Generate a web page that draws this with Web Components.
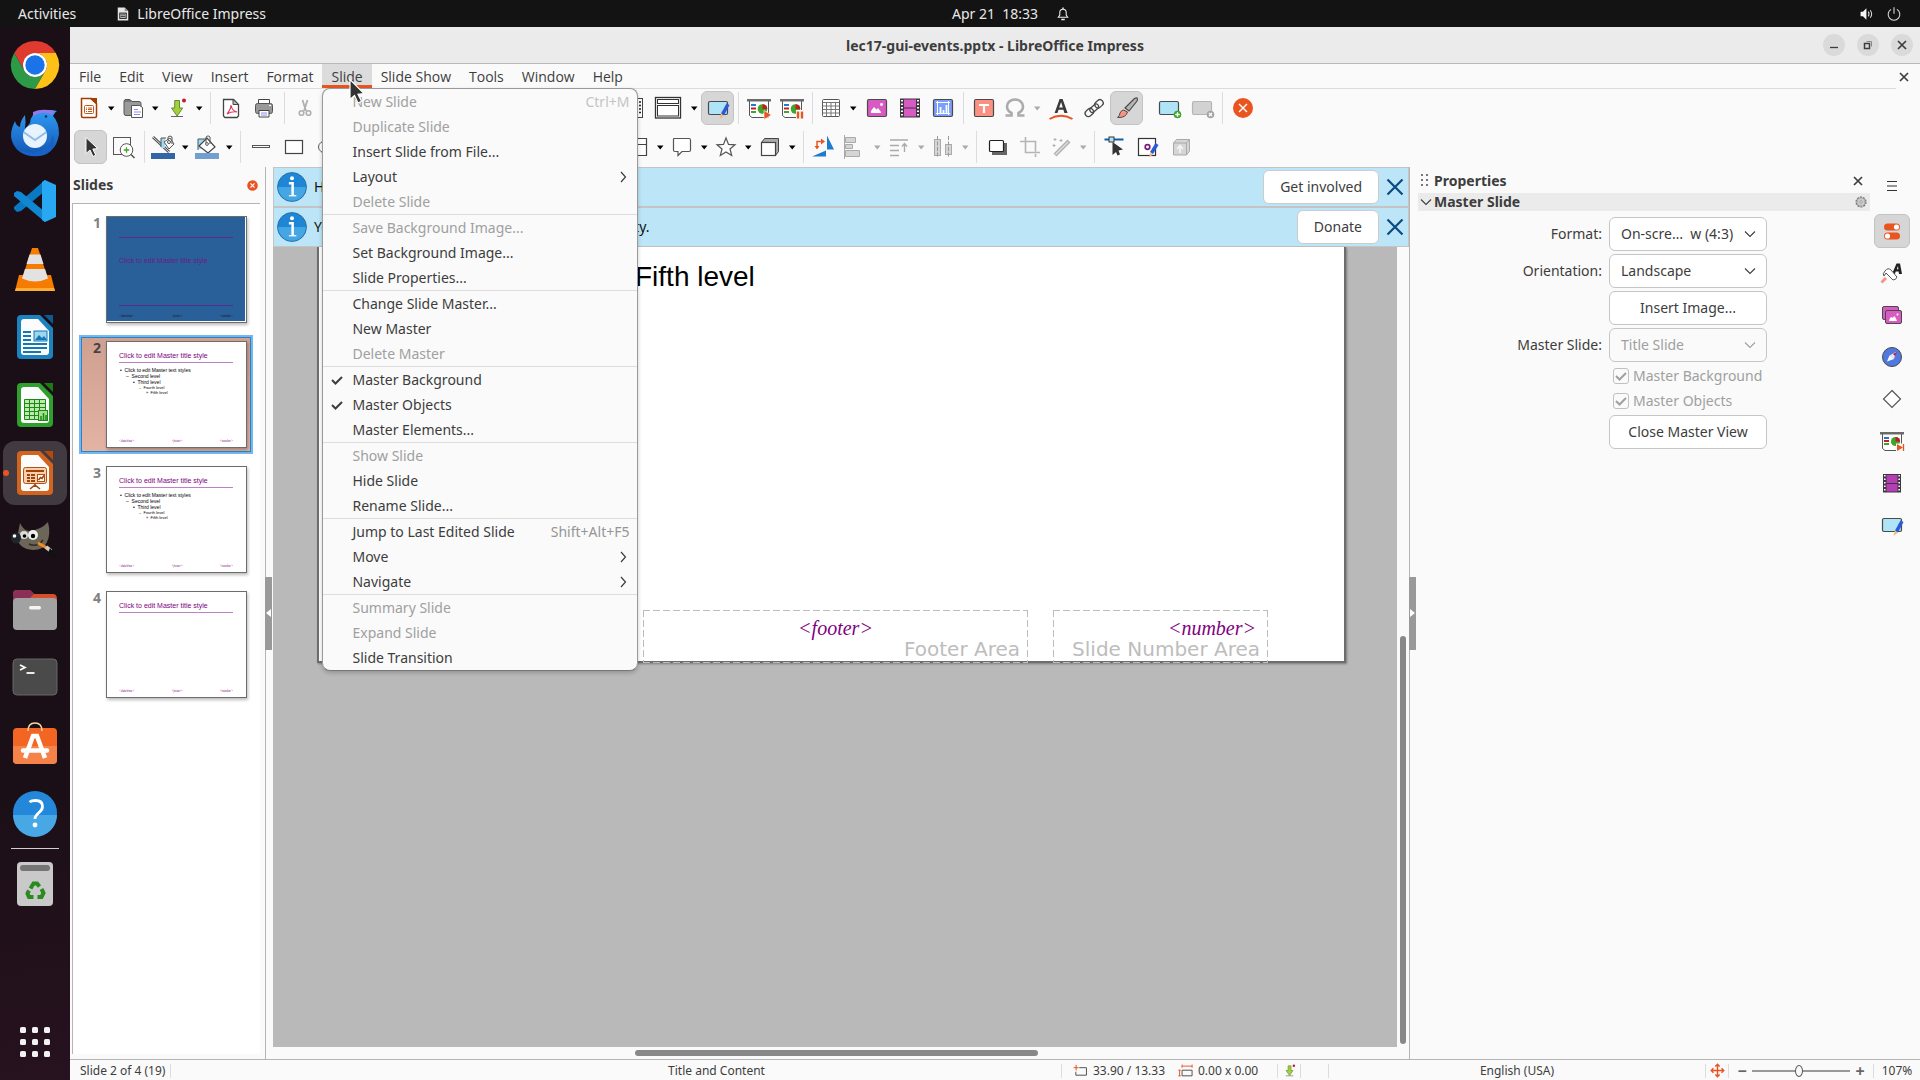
<!DOCTYPE html>
<html lang="en">
<head>
<meta charset="utf-8">
<title>lec17-gui-events.pptx - LibreOffice Impress</title>
<style>
html,body{margin:0;height:100%}
body{font:14px/20px "Noto Sans","Open Sans",sans-serif;color:#3d3d3d;background:#fafafa;overflow:hidden}
</style>
</head>
<body>
<desktop-shell></desktop-shell>
<script>
const ICONS = {
/* toolbar */
newdoc:`<path d="M4.500 2.500h10l5 5v12.500a1.500 1.500 0 0 1-1.500 1.500H6a1.500 1.500 0 0 1-1.500-1.500z" fill="#fff" stroke="#a33e03" stroke-width="1.500"/><path d="M12 2h8v7z" fill="#a33e03"/><rect x="7.500" y="9.500" width="9" height="8" rx="1" fill="none" stroke="#c25a1a"/><path d="M9 12h1m1 0h4m-6 1.500h1m1 0h4m-6 2h1m1 0h4" stroke="#c25a1a"/>`,
open:`<path d="M3 5.500q0-2 2-2h4l2 2h7q2 0 2 2v10q0 2-2 2H5q-2 0-2-2z" fill="#9a9a9a" stroke="#555"/><path d="M3.500 5h7" stroke="#555"/><path d="M10.500 9.500h8l3 2v10h-11z" fill="#fff" stroke="#555"/><path d="M13 13.500h4m-4 2.500h7m-7 2.500h6" stroke="#8d8df0"/>`,
save:`<path d="M9 4.500h6v7.500h4L12 20l-7-8h4z" transform="translate(2.500 0) scale(.8 1)" fill="#a4d040" stroke="#5b8420"/><path d="M6 20.500h12" stroke="#666"/><circle cx="19" cy="4.500" r="2" fill="#c9182b"/>`,
pdf:`<path d="M4.500 3.500h10l5 5V20l-1.500 1.500H6L4.500 20z" fill="#fff" stroke="#444" stroke-width="1.300"/><path d="M14 3.500v5h5.500z" fill="#bbb" stroke="#444"/><path d="M8 18q4-5 4-9 1 6 6 7-5-1-10 2z" fill="none" stroke="#e0355c" stroke-width="1.200"/>`,
print:`<path d="M6.500 3.500h11v4h-11z" fill="#fff" stroke="#444"/><rect x="3.500" y="7.500" width="17" height="10" rx="2" fill="#999" stroke="#555"/><path d="M7 14.500h10v6.500H7z" fill="#fff" stroke="#444"/><path d="M9 17h6m-6 2h6" stroke="#8d8df0"/><path d="M17 9.500h2" stroke="#fff"/>`,
cut:`<path d="M9.500 4l3.500 11M14.500 4l-3.500 11" stroke="#b0b0b0" stroke-width="1.800" fill="none"/><circle cx="8.500" cy="17" r="2.300" fill="none" stroke="#b0b0b0" stroke-width="1.600"/><circle cx="15.500" cy="17" r="2.300" fill="none" stroke="#b0b0b0" stroke-width="1.600"/>`,
gridview:`<rect x="2.500" y="2.500" width="19" height="19" fill="#fff" stroke="#444"/><path d="M6 6h14M6 9.500h14M6 13h14M6 16.500h14" stroke="#222" stroke-width="1.500" stroke-dasharray="2 2"/>`,
master:`<rect x="-.5" y="1.500" width="25" height="20.500" fill="#fff" stroke="#333" stroke-width="1.300"/><rect x="1.500" y="3.500" width="21" height="4" fill="#fff" stroke="#333"/><rect x="1.500" y="9.500" width="21" height="10.500" fill="#fff" stroke="#333"/>`,
masteredit:`<rect x="2.500" y="5.500" width="19" height="13" rx="1.500" fill="#aee3f8" stroke="#4a4a4a" stroke-width="1.200"/><path d="M20.500 7.500l3 1.500-5.500 10.500-3-2z" fill="#2a5bd7"/><path d="M15 17.500l3 2-4.500 3.500z" fill="#f5b87a"/>`,
present:`<path d="M2.500 4.500h19v16q0 1-1 1H5l-2.500-2z" fill="#fff" stroke="#555"/><path d="M0 3h24v2.500H0z" fill="#6b6b6b"/><path d="M4 9h5" stroke="#1f7bd0" stroke-width="2"/><path d="M4 12.500h5" stroke="#c9182b" stroke-width="2"/><path d="M4 16h5" stroke="#41a52a" stroke-width="2"/><circle cx="15.500" cy="13" r="4.800" fill="#41a52a"/><path d="M15.500 13V8.200a4.800 4.800 0 0 1 4.800 4.800z" fill="#c9182b"/><path d="M17 14.500l7.500 4.500-7.500 4.500z" fill="#e95420" stroke="#fff" stroke-width=".6"/>`,
presentpause:`<path d="M2.500 4.500h19v16q0 1-1 1H5l-2.500-2z" fill="#fff" stroke="#555"/><path d="M0 3h24v2.500H0z" fill="#6b6b6b"/><path d="M4 9h5" stroke="#1f7bd0" stroke-width="2"/><path d="M4 12.500h5" stroke="#c9182b" stroke-width="2"/><path d="M4 16h5" stroke="#41a52a" stroke-width="2"/><circle cx="15.500" cy="13" r="4.800" fill="#41a52a"/><path d="M15.500 13V8.200a4.800 4.800 0 0 1 4.800 4.800z" fill="#c9182b"/><path d="M16 14h8v9h-8z" fill="#fafafa"/><path d="M18 15.500v7m4-7v7" stroke="#e95420" stroke-width="2.400"/>`,
transition:`<path d="M2.500 4.500h19v16q0 1-1 1H5l-2.500-2z" fill="#fff" stroke="#555"/><path d="M0 3h24v2.500H0z" fill="#6b6b6b"/><path d="M4 9h5" stroke="#1f7bd0" stroke-width="2"/><path d="M4 12h5" stroke="#c9182b" stroke-width="2"/><path d="M4 15h5" stroke="#41a52a" stroke-width="2"/><circle cx="15.500" cy="12.500" r="4.600" fill="#41a52a"/><path d="M15.500 12.500V7.900a4.600 4.600 0 0 1 4.600 4.600z" fill="#c9182b"/><path d="M16 14.500h8v8h-8z" fill="#fafafa"/><path d="M17 15l6 3.500-6 3.500z" fill="#e95420"/><path d="M23.500 15v7" stroke="#e95420" stroke-width="1.300"/>`,
table:`<rect x="3.500" y="3.500" width="17" height="17" rx="1" fill="#fff" stroke="#555"/><path d="M3.500 6.500h17M3.500 10h17M3.500 13.500h17M3.500 17h17M7.500 6.500v14M12 6.500v14M16.500 6.500v14" stroke="#777"/>`,
image:`<rect x="2.500" y="3.500" width="19" height="17" rx="1.500" fill="#d85bc4" stroke="#4a4a4a" stroke-width="1.200"/><path d="M6 17v-2l3-4 2.500 2.500L13 12l3 4v1z" fill="#fff"/><circle cx="16.500" cy="8.500" r="1.400" fill="#fff"/>`,
video:`<rect x="2" y="2.500" width="20" height="19" fill="#3f3440"/><rect x="6" y="3.500" width="12" height="8" fill="#d85bc4"/><rect x="6" y="12.500" width="12" height="8" fill="#d85bc4"/><path d="M4 4v17M20 4v17" stroke="#fff" stroke-width="2" stroke-dasharray="1.500 2"/>`,
videodeck:`<rect x="3" y="3" width="18" height="18.500" fill="#3f3440"/><rect x="6.500" y="4" width="11" height="8" fill="#b43fb4"/><rect x="6.500" y="13" width="11" height="7.500" fill="#b43fb4"/><path d="M4.800 4v17M19.200 4v17" stroke="#fff" stroke-width="1.600" stroke-dasharray="1.500 2"/>`,
chart:`<rect x="2.500" y="3.500" width="19" height="17" rx="1.500" fill="#7ba0fb" stroke="#4a4a4a" stroke-width="1.200"/><path d="M6.500 5v14M5 6.500h14M17.500 5v14M5 17.500h14" stroke="#fff"/><path d="M9.500 17v-6m3 6v-3m3 3V9" stroke="#fff" stroke-width="1.800"/>`,
textbox:`<rect x="2.500" y="3.500" width="19" height="17" rx="1.500" fill="#fb9183" stroke="#4a4a4a" stroke-width="1.200"/><path d="M7 9h10M12 9v8" stroke="#fff" stroke-width="2.200"/>`,
omega:`<path d="M2.500 19.500h6v-2.500C5.500 15.500 4 13 4 10.500a8 7 0 0 1 16 0c0 2.500-1.500 5-4.500 6.500v2.500h6" fill="none" stroke="#ababab" stroke-width="2.600"/>`,
fontwork:`<path d="M6 17l5-14h3l5 14h-3.200l-1-3.200H9.900l-1 3.200zm4.600-5.600h3.600L12.500 6z" transform="translate(-.4 0)" fill="#3a3a3a"/><path d="M.5 23q11.500-6.500 23 0" fill="none" stroke="#e95420" stroke-width="2"/>`,
link:`<g fill="none" stroke="#4a4a4a" stroke-width="1.300" transform="rotate(-42 12 12)"><rect x="1" y="9" width="9" height="6.500" rx="3.200"/><rect x="14" y="9" width="9" height="6.500" rx="3.200"/><rect x="7" y="9.800" width="10" height="5" rx="2.500"/></g>`,
brush:`<path d="M22 2q1 1 0 3l-8 10-4-3 9-9q2-1.500 3-1z" fill="#b5b5b5" stroke="#4a4a4a" stroke-width="1.200"/><path d="M8.500 14l4 2q-1.500 6-10 5.500 2.500-2 2.500-4.500 1.500-3 3.500-3z" fill="#fb9183" stroke="#4a4a4a"/>`,
newslide:`<rect x="2.500" y="5.500" width="19" height="13" rx="1.500" fill="#aee3f8" stroke="#4a4a4a" stroke-width="1.200"/><circle cx="20.500" cy="18.500" r="3.800" fill="#41a52a"/><path d="M18.300 18.500h4.400m-2.200-2.200v4.400" stroke="#fff" stroke-width="1.300"/>`,
delslide:`<rect x="2.500" y="5.500" width="19" height="13" rx="1.500" fill="#d2d2d2" stroke="#b5b5b5" stroke-width="1.200"/><circle cx="20.500" cy="18.500" r="3.800" fill="#a5a5a5"/><path d="M19 17l3 3m0-3l-3 3" stroke="#fff" stroke-width="1.200"/>`,
closemaster:`<circle cx="12" cy="12" r="10" fill="#e95420"/><path d="M8 8l8 8m0-8l-8 8" stroke="#fff" stroke-width="1.400"/>`,
arrow:`<path d="M7 2.500v16l4-3.500 3 6.500 2.800-1.300-3-6.200 5-.3z" fill="#333" stroke="#fff"/>`,
zoomin:`<rect x="1.500" y="2.500" width="17" height="17" fill="#fafafa" stroke="#555"/><circle cx="14.500" cy="15" r="6.300" fill="#fff" stroke="#555"/><path d="M19 19.500l3.500 3.500" stroke="#555" stroke-width="1.600"/><path d="M11.800 15h5.400m-2.700-2.700v5.400" stroke="#41a52a" stroke-width="1.300"/>`,
linecolor:`<path d="M2 2l16 15" stroke="#555" stroke-width="3"/><path d="M2 2l16 15" stroke="#ddd"/><path d="M10 3h4v10h-4z" fill="#9ddcf7"/><path d="M10 3h5M10 3v9" stroke="#555"/><path d="M13 7l6-4 4 6-5 5z" fill="#fff" stroke="#555"/><circle cx="18" cy="7" r="1.500" fill="#fff" stroke="#555"/><path d="M17 5V2q2-2 4 0v7" stroke="#555" fill="none"/><rect y="18" width="24" height="6" fill="#3465a4"/>`,
fillcolor:`<path d="M3 4h6v10H3z" fill="#9ddcf7"/><path d="M3 15V4h8" stroke="#555" fill="none"/><path d="M4 11l8-8 8 9-7 6z" fill="#fff" stroke="#444" stroke-width="1.200"/><path d="M11 8V2q2-2.500 4 0v7" stroke="#555" fill="none"/><circle cx="12" cy="9" r="1.400" fill="#fff" stroke="#555"/><rect y="18" width="24" height="6" fill="#729fcf"/>`,
line:`<rect x="3.500" y="10.500" width="17" height="2" fill="#fff" stroke="#555"/>`,
rect:`<rect x="3.500" y="5.500" width="17" height="13" fill="#fff" stroke="#444" stroke-width="1.200"/>`,
ellipse:`<ellipse cx="12" cy="12" rx="8.500" ry="6.500" fill="#fff" stroke="#555"/>`,
flow:`<path d="M3.500 3.500h17v17h-17z M3.500 9.500h17" fill="#fff" stroke="#444" stroke-width="1.200"/>`,
callout:`<path d="M4 3.500h15q1.500 0 1.500 1.500v10q0 1.500-1.500 1.500h-7L8 20.500v-4H5q-1.500 0-1.500-1.500V4z" fill="#fff" stroke="#555" stroke-width="1.200"/>`,
star:`<path d="M12 3l2.500 6.400 6.500.4-5 4.200 1.700 6.500L12 16.900l-5.700 3.600L8 14l-5-4.200 6.500-.4z" fill="#fff" stroke="#555" stroke-width="1.200"/>`,
cube:`<path d="M3.500 7.500l3-4h14v13l-3 4z" fill="#aaa" stroke="#444"/><rect x="3.500" y="7.500" width="14" height="13" fill="#fff" stroke="#444" stroke-width="1.200"/>`,
rotate:`<path d="M15 .5v14h7zM14 15.500v6H0z" fill="#1f7bd0"/><path d="M5 13V6.500h5" fill="none" stroke="#e95420" stroke-width="1.500"/><path d="M9 3.500l4 3-4 3zM2.500 11h5L5 14.500z" fill="#e95420"/>`,
align:`<path d="M1.500 0v24" stroke="#aaa"/><path d="M2.500 2.500h10v5h-10zM2.500 9.500h7v4h-7zM2.500 15.500h14v6h-14z" fill="#d5d5d5" stroke="#aaa"/>`,
arrange:`<path d="M3 5h18M3 10.500h9M3 15.500h9M3 20.500h9" stroke="#aaa" stroke-width="1.500"/><path d="M17.500 17V9m-2.500 2.500l2.500-3 2.500 3" fill="none" stroke="#aaa" stroke-width="1.400"/>`,
distribute:`<rect x="3.500" y="4.500" width="6" height="16" fill="#d5d5d5" stroke="#aaa"/><rect x="14.500" y="9.500" width="6" height="10" fill="#d5d5d5" stroke="#aaa"/><path d="M6.500 1v22M17.500 1v22" stroke="#999" stroke-dasharray="4 1.500"/>`,
shadow:`<path d="M7 8h15v12H7z" fill="#666"/><rect x="4.500" y="5.500" width="14" height="11" rx="1" fill="#fff" stroke="#222" stroke-width="1.200"/>`,
crop:`<path d="M2 6.500h15.500v10M7.500 2v15.500H22M17.500 19v3" fill="none" stroke="#b5b5b5" stroke-width="1.600"/>`,
filter:`<path d="M6 20L20 6" stroke="#b0b0b0" stroke-width="4"/><path d="M6.500 19.500L19 7" stroke="#ddd" stroke-width="1.500"/><path d="M6 3v3m-1.500-1.500h3M12 4v3m-1.500-1.500h3M5 9v3m-1.500-1.500h3" stroke="#b0b0b0"/>`,
points:`<path d="M1.500 4.500h19" stroke="#0e5ea8" stroke-width="2"/><rect x="6" y="2" width="5" height="5" fill="#aee3f8" stroke="#333"/><path d="M9.500 7v13l3.500-3 1.500 3.500 2.500-1-1.500-4 4.500-1z" fill="#333"/>`,
glue:`<rect x="2.500" y="3.500" width="17" height="17" fill="#fff" stroke="#333" stroke-width="1.200"/><circle cx="11.500" cy="12" r="2.300" fill="none" stroke="#7a1b7a" stroke-width="1.700"/><path d="M19.500 8l3 2-5.500 9-3-2z" fill="#2a5bd7"/><path d="M14 17.500l3 2-4 3z" fill="#f5b87a"/>`,
extrude:`<path d="M4.500 8l3-3.500h13V16l-3 4h-13z" fill="#d5d5d5" stroke="#aaa"/><path d="M4.500 8h13v12m0-12l3-3.500" fill="none" stroke="#aaa"/><path d="M11 18v-7m-3 3l3-3.500 3 3.500" fill="none" stroke="#f5f5f5" stroke-width="1.600"/>`,
down:`<path d="M9 10.500h6.500L12.200 14.500z" fill="currentColor"/>`,
/* window parts */
chevdown:`<path d="M7 9.500l5 5 5-5" fill="none" stroke="currentColor" stroke-width="1.100"/>`,
chevright:`<path d="M10 7l4.500 5-4.500 5" fill="none" stroke="currentColor" stroke-width="1.200"/>`,
check:`<path d="M7 12l3.500 3.500 6.500-6.500" fill="none" stroke="currentColor" stroke-width="2"/>`,
close:`<path d="M8 8l8 8m0-8l-8 8" stroke="currentColor" stroke-width="1.700"/>`,
closebig:`<path d="M4.500 4.500l15 15m0-15l-15 15" stroke="#0b4a82" stroke-width="2.200"/>`,
min:`<path d="M8 14.500h8" stroke="currentColor" stroke-width="1.300"/>`,
restore:`<path d="M8.500 10.500h5v5h-5z" fill="none" stroke="currentColor" stroke-width="1.500"/><path d="M10.500 8.500h5v5" fill="none" stroke="#888"/>`,
info:`<circle cx="12" cy="12" r="11.600" fill="#1f86d6" stroke="#27668f" stroke-width=".6"/><path d="M1 12h22a11 11 0 0 1-22 0z" fill="#45a6e4"/><circle cx="12" cy="5" r="1.600" fill="#fff"/><path d="M9.500 9H12.500v10" fill="none" stroke="#fff" stroke-width="2"/><path d="M9.500 19h6" stroke="#fff"/>`,
grip:`<path d="M9 6h2v2H9zm5 0h2v2h-2zM9 11h2v2H9zm5 0h2v2h-2zM9 16h2v2H9zm5 0h2v2h-2z" fill="#777"/>`,
gear:`<circle cx="12" cy="12" r="8.500" fill="none" stroke="#777" stroke-width="2" stroke-dasharray="3.600 1.700"/><circle cx="12" cy="12" r="7" fill="#ccc" stroke="#777"/><circle cx="12" cy="12" r="2.200" fill="#eee" stroke="#777"/>`,
burger:`<path d="M7 7.500h10M7 12h10M7 16.500h10" stroke="#333" stroke-width="1.200"/>`,
props:`<rect x="4" y="4.500" width="16" height="7" rx="3.500" fill="#e95420"/><circle cx="16.500" cy="8" r="2.600" fill="#fff"/><rect x="4" y="13.500" width="16" height="7" rx="3.500" fill="#e95420"/><circle cx="7.500" cy="17" r="2.600" fill="#fff"/>`,
styles:`<path d="M12 13L16.500 2.500H20L22 13h-3l-.4-2.500h-2.800L14.800 13zm4.800-4.800h1.600L18 5z" fill="#222"/><path d="M5 10q3-4 6-1l6 7q-1 3-4 3l-7-7-2 3q-2-2 1-5z" fill="#fff" stroke="#555"/><path d="M1.500 21.500l4.500-4.500" stroke="#fb9183" stroke-width="2.800"/>`,
gallery:`<rect x="2.500" y="3.500" width="16" height="13" rx="1.500" fill="#d85bc4" stroke="#4a4a4a"/><rect x="5.500" y="7.500" width="16" height="13" rx="1.500" fill="#d85bc4" stroke="#4a4a4a"/><path d="M9 18l1-3 1.500-1 1.500 1 1-2 1.500 1.500L17 18z" fill="#fff"/><circle cx="17.500" cy="11.500" r="1" fill="#fff"/>`,
navigator:`<circle cx="12" cy="12" r="9.500" fill="#4f78e0" stroke="#4a4a4a"/><path d="M7 16.500l2.500-6 4.500 3.500z" fill="#fff"/><path d="M9.500 10.500l6.500-3.500-2 7z" fill="#e8e8f4"/><path d="M13 9l4-2-2 4z" fill="#c9182b"/>`,
diamond:`<path d="M12 3.500l8.500 8.500-8.500 8.500L3.500 12z" fill="#fff" stroke="#555" stroke-width="1.200"/>`,
panelclose:`<circle cx="12" cy="12" r="11.500" fill="#e95420"/><path d="M7.500 7.500l9 9m0-9l-9 9" stroke="#fff" stroke-width="2.600"/>`,
pos:`<path d="M10 7.500h11.500v12h-17V14" fill="none" stroke="#555" stroke-width="1.600"/><path d="M1 7.500h8M5 3v9" stroke="#e95420" stroke-width="1.600"/>`,
size:`<path d="M6.500 11.500h16v9h-16z" fill="none" stroke="#555" stroke-width="1.600"/><path d="M6 5h17M6.500 2.500v5M22.500 2.500v5M2.500 11v10M.5 11.500h4M.5 20.500h4" stroke="#e95420" stroke-width="1.500"/>`,
fit:`<path d="M12 3v18M3 12h18M8.500 5.500L12 2l3.500 3.500M8.500 18.500L12 22l3.500-3.500M5.500 8.500L2 12l3.500 3.500M18.500 8.500L22 12l-3.500 3.500" stroke="#e95420" stroke-width="2.300" fill="none"/>`,
/* top bar */
appicon:`<path d="M3 1h12l6 6v16H3z" fill="#e6e6e6"/><path d="M15 1l6 6h-6z" fill="#888"/><rect x="6.500" y="10.500" width="11" height="9" fill="none" stroke="#222" stroke-width="1.800"/><path d="M8 13.500h8M8 16.500h8" stroke="#222" stroke-width="1.600"/>`,
bell:`<path d="M4 17.500h16l-2.500-3.500V9.500a5.500 5.500 0 0 0-11 0V14z" fill="none" stroke="#eee" stroke-width="1.800"/><path d="M9 21.500h6M12 1v3" stroke="#eee" stroke-width="2.400"/>`,
volume:`<path d="M1 8h4l6-6v20l-6-6H1z" fill="#f5f5f5"/><path d="M14 8q3 4 0 8M17.500 5.500q5 6.500 0 13" stroke="#ddd" stroke-width="1.800" fill="none"/>`,
power:`<path d="M7 4a10 10 0 1 0 10 0M12 .5v11" fill="none" stroke="#ddd" stroke-width="1.800"/>`
};
const DOCK = {
chrome:`<path d="M24 12H44.800A24 24 0 0 0 3.200 12L13.600 30A12 12 0 0 1 24 12Z" fill="#e13b30"/><path d="M13.600 30L3.200 12A24 24 0 0 0 24 48L34.400 30A12 12 0 0 1 13.600 30Z" fill="#2c9a46"/><path d="M34.400 30L24 48A24 24 0 0 0 44.800 12H24A12 12 0 0 1 34.400 30Z" fill="#fdc118"/><circle cx="24" cy="24" r="12" fill="#fff"/><circle cx="24" cy="24" r="9.700" fill="#1a73e8"/>`,
bird:`<defs><linearGradient id="g" x2="0" y2="1"><stop stop-color="#2f9cf4"/><stop offset="1" stop-color="#1256b4"/></linearGradient></defs><path d="M4 12q-6 12-3 20 5 14 22 15 22 0 25-22 0-12-6-18 2-4 4-5-8-2-17 0-9 2-10 12l-5 6q1-8 0-14-5 6-5 12-4-1-5-6z" fill="url(#g)"/><path d="M22 3q8-4 22-1l-3 4q-8-5-19 1z" fill="#9678e8"/><circle cx="24" cy="27" r="12" fill="#e9f3fd"/><path d="M12.500 23l11.500 8 11.500-8" fill="none" stroke="#8fbdea" stroke-width="2"/><path d="M1 32q8 14 24 11 15-3 17-18 4 20-14 22-20 2-27-15z" fill="#1762c4"/><circle cx="35" cy="7.500" r="1.200" fill="#0b2f66"/>`,
code:`<path d="M34 3v11L10 34l-4 1-3-3v-2z" fill="#0a79c4"/><path d="M3 16l3-2 4 1 24 20v10L3 19z" fill="#1187d2"/><path d="M34 3l11 5v32l-11 5-3-2V5z" fill="#28a8f2"/>`,
vlc:`<path d="M8 30h32l4 16H4z" fill="#f57c00"/><path d="M5 43h38l1 3H4z" fill="#ffae35"/><path d="M21 3h6l11 34q-14 8-28 0z" fill="#f57c00"/><path d="M18.500 9.500h11l3 9.500h-17zM14 24h20l3 9.500q-13 6-26 0z" fill="#e2e2e2"/>`,
writer:`<path d="M6 6q0-4 4-4h19l13 13v27q0 4-4 4H10q-4 0-4-4z" fill="#1b83c0"/><path d="M10 9q0-3 3-3h14l11 12v21q0 3-3 3H13q-3 0-3-3z" fill="#fcfcfc"/><path d="M33 2h9v9z" fill="#0c5c90"/><path d="M12 19h8M12 23h8M12 27h8M12 31h24M12 35h24M12 39h18" stroke="#1378b5" stroke-width="2"/><rect x="23" y="18" width="13" height="10" fill="#9cd6ef" stroke="#1378b5"/><path d="M24 27l4-5 3 3 2-2 3 4z" fill="#1378b5"/>`,
calc:`<path d="M6 6q0-4 4-4h19l13 13v27q0 4-4 4H10q-4 0-4-4z" fill="#2fa02c"/><path d="M10 9q0-3 3-3h14l11 12v21q0 3-3 3H13q-3 0-3-3z" fill="#fcfcfc"/><path d="M33 2h9v9z" fill="#1b7a10"/><path d="M13.500 18.500h21v20h-21z" fill="#bde8b0" stroke="#1b8a14"/><path d="M13.500 22.500h21m-21 4h21m-21 4h21m-21 4h21M18.500 18.500v20m5-20v20m5-20v20" stroke="#1b8a14"/><rect x="27.500" y="29.500" width="9" height="10" fill="#a4df90" stroke="#1b8a14"/><path d="M30 39v-4m2.500 4v-7m2.500 7v-5" stroke="#1b8a14" stroke-width="1.500"/>`,
impress:`<path d="M6 6q0-4 4-4h19l13 13v27q0 4-4 4H10q-4 0-4-4z" fill="#d2641e"/><path d="M10 9q0-3 3-3h14l11 12v21q0 3-3 3H13q-3 0-3-3z" fill="#fcfcfc"/><path d="M33 2h9v9z" fill="#b8480a"/><rect x="12.500" y="18.500" width="23" height="16" rx="2" fill="#f6cfae" stroke="#b5500f"/><path d="M15 22h18M16 26h3m-3 3h3m-3 3h3m1-6h4m-4 3h4m-4 3h4" stroke="#a04308" stroke-width="1.800"/><rect x="26.500" y="25.500" width="7" height="7" fill="#fff" stroke="#b5500f"/><path d="M27.500 31l2-2.500 1.500 1 2-3M19 40l5-4 5 4M24 35v3" fill="none" stroke="#a04308" stroke-width="1.600"/>`,
gimp:`<path d="M9 6q3 7 9 8 12-1 19-9 3 12-1 20-3 8-14 8-14-1-16-12z" fill="#6c6658"/><circle cx="22" cy="18" r="5" fill="#eee"/><circle cx="13" cy="18" r="4" fill="#ddd"/><circle cx="22" cy="19" r="2.200"/><circle cx="13.500" cy="19" r="1.800"/><ellipse cx="5" cy="21" rx="5" ry="5.500" fill="#20252b"/><circle cx="3.500" cy="19" r="1.800" fill="#fff"/><path d="M18 27q8 4 14-4" fill="none" stroke="#2e2a22" stroke-width="1.500"/><path d="M27 26l9 5" stroke="#f28c1e" stroke-width="3"/><path d="M35 30l5 4" stroke="#ccc" stroke-width="4"/><path d="M39 31l8 10q-8 0-10-5z" fill="#111"/>`,
files:`<path d="M2 9q0-4 4-4h13l4 4h19q4 0 4 5v6H2z" fill="#d4502c"/><path d="M2 9q0-4 4-4h13l4 4-8 8H2z" fill="#8a3058"/><rect x="2" y="13" width="44" height="32" rx="4" fill="#a2a2a2"/><rect x="18" y="21" width="12" height="3.500" rx="1.700" fill="#f4f4f4"/>`,
term:`<rect x="2" y="6" width="44" height="36" rx="4" fill="#4a4a4a" stroke="#666"/><path d="M9 12l5 2.500-5 2.500" fill="none" stroke="#fff" stroke-width="1.700"/><path d="M15.500 20h8" stroke="#fff" stroke-width="1.800"/>`,
store:`<rect x="2" y="7" width="44" height="36" rx="4" fill="#f26522"/><path d="M2 25h44v14q0 4-4 4H6q-4 0-4-4z" fill="#f58248"/><path d="M17 10q0-8 7-8t7 8" fill="none" stroke="#f8d9a0" stroke-width="1.500"/><path d="M14 37l8-22h4l8 22" fill="none" stroke="#fff" stroke-width="4.500"/><path d="M12 29.500h24" stroke="#fff" stroke-width="4.500" stroke-linecap="round"/>`,
help:`<circle cx="24" cy="24" r="22" fill="#2388da"/><path d="M2 26h44a22 22 0 0 1-44 0z" fill="#48a8e6"/><path d="M18.500 13q2-1.500 6-1.500 7 0 7 6 0 3.500-4 6.500-3.500 3-3.500 6" fill="none" stroke="#fff" stroke-width="2.800"/><circle cx="24" cy="36" r="2.400" fill="#fff"/>`,
trash:`<rect x="6" y="2" width="36" height="44" rx="4" fill="#c9c9c9"/><rect x="9" y="5" width="30" height="6" rx="3" fill="#757575"/><g fill="none" stroke="#2a8a1e" stroke-width="4"><path d="M19.500 28.500l3-5h3.500l2.500 3"/><path d="M30.500 29l2 4-2 4h-4"/><path d="M22.500 37h-4.500l-1.500-3.500 1.500-3"/></g>`,
apps:`<g fill="#f2f2f2"><rect x="9" y="9" width="6" height="6" rx="1.500"/><rect x="21" y="9" width="6" height="6" rx="1.500"/><rect x="33" y="9" width="6" height="6" rx="1.500"/><rect x="9" y="21" width="6" height="6" rx="1.500"/><rect x="21" y="21" width="6" height="6" rx="1.500"/><rect x="33" y="21" width="6" height="6" rx="1.500"/><rect x="9" y="33" width="6" height="6" rx="1.500"/><rect x="21" y="33" width="6" height="6" rx="1.500"/><rect x="33" y="33" width="6" height="6" rx="1.500"/></g>`
};
const BASE = `*{box-sizing:border-box}button{font:inherit;color:inherit;background:none;border:0;margin:0;padding:0}`;
function define(name, css, html) {
  customElements.define(name, class extends HTMLElement {
    constructor() { super(); this.attachShadow({mode:"open"}); }
    connectedCallback() {
      const body = typeof html === "function" ? html(this) : html;
      this.shadowRoot.innerHTML = `<style>${BASE}${css}</style>${body}`;
    }
  });
}
const at = (el, n) => el.getAttribute(n) || "";

define("lo-icon", `:host{display:block;flex:none;width:var(--size,24px);height:var(--size,24px)}svg{display:block;width:100%;height:100%;overflow:visible}`,
  el => { const n = at(el,"name"); return DOCK[n] ? `<svg viewBox="0 0 48 48" aria-hidden="true">${DOCK[n]}</svg>` : `<svg viewBox="0 0 24 24" aria-hidden="true">${ICONS[n]}</svg>`; });

/* system top bar */
define("top-bar", `:host{display:grid;grid-template-columns:1fr auto 1fr;align-items:center;height:27px;background:#131313;color:#e8e8e8}
div{display:flex;align-items:center}.l{padding-left:18px;gap:40px}.app{gap:7px}.c{padding-left:102px;gap:18px}.r{justify-content:flex-end;gap:13px;padding-right:19px}
span{white-space:pre}`,
`<div class="l"><button>Activities</button><div class="app"><lo-icon name="appicon" style="--size:14px"></lo-icon><span>LibreOffice Impress</span></div></div>
<div class="c"><span>Apr 21  18:33</span><lo-icon name="bell" style="--size:14px"></lo-icon></div>
<div class="r"><lo-icon name="volume" style="--size:14px"></lo-icon><lo-icon name="power" style="--size:14px"></lo-icon></div>`);

/* launcher */
define("dock-item", `:host{display:block;padding:2px 3px;height:68px}button{position:relative;display:grid;place-items:center;width:64px;height:64px;border-radius:12px}
:host([active]) button{background:#423a41}:host([active]) button::before{content:"";position:absolute;left:0;top:29px;width:6px;height:6px;border-radius:50%;background:#e95420}lo-icon{--size:48px}`,
el => `<button aria-label="${at(el,"icon")}"><lo-icon name="${at(el,"icon")}"></lo-icon></button>`);
define("app-dock", `:host{display:flex;flex-direction:column;width:70px;padding:4px 0;background:linear-gradient(170deg,#1a0f16 0 70%,#27121f)}
hr{width:48px;margin:1px auto;border:0;height:1px;background:#d0d0d0}.s{flex:1}`,
["chrome","bird","code","vlc","writer","calc","impress","gimp","files","term","store","help"].map(n => `<dock-item icon="${n}"${n==="impress"?" active":""}></dock-item>`).join("") +
`<hr><dock-item icon="trash"></dock-item><div class="s"></div><dock-item icon="apps"></dock-item>`);

define("title-bar", `:host{display:grid;grid-template-columns:1fr auto 1fr;align-items:center;height:37px;background:#ebebeb;border-bottom:1px solid #b9b9b9;font-weight:700}
h1{margin:1px 0 0;font:inherit}.r{display:flex;justify-content:flex-end;gap:12px;padding-right:7px}button{width:22px;height:22px;border-radius:50%;background:#dadada;display:grid;place-items:center}lo-icon{margin:-1px}`,
`<span></span><h1>lec17-gui-events.pptx - LibreOffice Impress</h1><div class="r"><button aria-label="Minimize"><lo-icon name="min"></lo-icon></button><button aria-label="Restore"><lo-icon name="restore"></lo-icon></button><button aria-label="Close"><lo-icon name="close"></lo-icon></button></div>`);

/* menus */
define("menu-item", `:host{display:block}button{display:flex;align-items:center;width:100%;height:25px;padding:0 8px 0 0;text-align:left}
.m{width:29px;padding-left:2px;flex:none}.t{flex:1}.k{color:#969696}:host([disabled]) button{color:#a0a0a0}:host([disabled]) .k{color:#c4c4c4}lo-icon[name=chevright]{margin-right:-6px}`,
el => `<button role="menuitem"${el.hasAttribute("disabled")?" disabled":""}><span class="m">${el.hasAttribute("checked")?'<lo-icon name="check"></lo-icon>':""}</span><span class="t"><slot></slot></span>${at(el,"key")?`<span class="k">${at(el,"key")}</span>`:""}${el.hasAttribute("sub")?'<lo-icon name="chevright"></lo-icon>':""}</button>`);
define("menu-popup", `:host{position:absolute;z-index:5;width:316px;background:#fafafa;border:1px solid #9a9a9a;border-bottom-color:#777;border-radius:8px;box-shadow:0 2px 4px #0003;overflow:hidden}::slotted(hr){margin:0;border:0;height:1px;background:#dcdcdc}`, `<slot></slot>`);
define("menu-title", `:host{display:block;position:relative}button{height:24px;padding:1px 9px 0;white-space:nowrap;font-family:"Open Sans",sans-serif}
:host([open]) button{background:#dcdcdc;box-shadow:inset 0 -3px #e95420}::slotted(menu-popup){top:24px;left:0}::slotted(svg){position:absolute;z-index:6;left:26px;top:14px}`,
el => `<button>${at(el,"label")}</button><slot></slot>`);
define("menu-bar", `:host{display:flex;height:25px;padding-right:8px;align-items:stretch}nav{display:flex;flex:1;border-bottom:1px solid #dcdcdc}.x{width:16px;display:grid;place-items:center}.x lo-icon{margin:0 -4px}`,
`<nav><menu-title label="File"></menu-title><menu-title label="Edit"></menu-title><menu-title label="View"></menu-title><menu-title label="Insert"></menu-title><menu-title label="Format"></menu-title>
<menu-title label="Slide" open><menu-popup role="menu">
<menu-item disabled key="Ctrl+M">New Slide</menu-item><menu-item disabled>Duplicate Slide</menu-item><menu-item>Insert Slide from File...</menu-item><menu-item sub>Layout</menu-item><menu-item disabled>Delete Slide</menu-item><hr>
<menu-item disabled>Save Background Image...</menu-item><menu-item>Set Background Image...</menu-item><menu-item>Slide Properties...</menu-item><hr>
<menu-item>Change Slide Master...</menu-item><menu-item>New Master</menu-item><menu-item disabled>Delete Master</menu-item><hr>
<menu-item checked>Master Background</menu-item><menu-item checked>Master Objects</menu-item><menu-item>Master Elements...</menu-item><hr>
<menu-item disabled>Show Slide</menu-item><menu-item>Hide Slide</menu-item><menu-item>Rename Slide...</menu-item><hr>
<menu-item key="Shift+Alt+F5">Jump to Last Edited Slide</menu-item><menu-item sub>Move</menu-item><menu-item sub>Navigate</menu-item><hr>
<menu-item disabled>Summary Slide</menu-item><menu-item disabled>Expand Slide</menu-item><menu-item>Slide Transition</menu-item>
</menu-popup><svg width="20" height="26" viewBox="0 0 20 26"><path d="M2 1.500v20l4.500-4 3.500 7.500 3.500-1.700-3.500-7 6-.6z" fill="#333" stroke="#fff" stroke-width="1.200"/></svg></menu-title>
<menu-title label="Slide Show"></menu-title><menu-title label="Tools"></menu-title><menu-title label="Window"></menu-title><menu-title label="Help"></menu-title></nav><button class="x" aria-label="Close document"><lo-icon name="close"></lo-icon></button>`);

/* toolbars */
define("tool-button", `:host{display:flex;height:34px}button{display:grid;place-items:center;width:33px}:host([drop]) .a{width:30px}.d{width:14px;color:#000}.d lo-icon{margin:0 -5px}:host([dim]) .d{color:#ababab}
:host([drop][wide]) .a{width:38px}:host([active]) .a{background:#d6d6d6;border:1px solid #c3c3c3;border-radius:6px}`,
el => `<button class="a" aria-label="${at(el,"icon")}"><lo-icon name="${at(el,"icon")}"></lo-icon></button>${el.hasAttribute("drop")?'<button class="d" aria-label="More"><lo-icon name="down"></lo-icon></button>':""}`);
const bar = list => list.split(" ").map(s => {
  if (s === "|") return "<i></i>";
  if (/^\d/.test(s)) return `<b style="width:${s}px"></b>`;
  const [n, f = ""] = s.split(":");
  return `<tool-button icon="${n}"${f.includes("v")?" drop":""}${f.includes("a")?" active":""}${f.includes("d")?" dim":""}${f.includes("w")?" wide":""}></tool-button>`;
}).join("");
define("tool-bars", `:host{display:flex;flex-direction:column;gap:5px;padding:2px 4px 3px}div{display:flex;align-items:center}i{width:1px;height:32px;margin:0 3px 0 4px;background:#dcdcdc}`,
`<div>${bar("newdoc:v open:v save:v | pdf print | cut 295 gridview master:vw masteredit:a | present presentpause | table:v image video chart | textbox omega:vd fontwork link brush:a 9 newslide delslide | closemaster")}</div>
<div>${bar("arrow:a zoomin | linecolor:v fillcolor:v | line rect ellipse 280 flow:v callout:v star:v cube:v | rotate align:vd arrange:vd distribute:vd | shadow crop filter:vd | points glue extrude")}</div>`);

/* slide panel */
define("slide-thumb", `:host{display:flex;width:174px;height:119px;padding:6px}
:host([selected]){background:linear-gradient(#cf9f8f,#e3b3a4);box-shadow:inset 0 0 0 2px #74b6ee,inset 0 0 0 3px #2884c7}
.n{width:21px;padding-right:5px;text-align:right;font-weight:700;color:#808080;line-height:14px}:host([selected]) .n{color:#444}
.p{display:flex;flex-direction:column;width:141px;height:107px;padding:8px 13px 3px 12px;border:1px solid #6d6d6d;background:#fff;box-shadow:1px 2px 3px #0004;font-family:"Liberation Sans",sans-serif;color:#000}
.t{font-size:7px;line-height:12px;color:#800080;border-bottom:1px solid #c080c8;white-space:nowrap}ul{list-style:none;margin:4px 0 0 1px;padding:0;font-size:5px;line-height:6px;white-space:pre}
li:nth-child(2){padding-left:6px}li:nth-child(3){padding-left:13px}li:nth-child(n+4){font-size:4px;line-height:5px;padding-left:19px}li:nth-child(5){padding-left:26px}
.f{display:flex;justify-content:space-between;margin-top:auto;font:italic 3px/6px "Liberation Serif",serif;color:#800080}
:host([dark]) .p{background:#2a6099;box-shadow:inset -1px -1px #fff,1px 2px 3px #0004}:host([dark]) .t{padding:17px 0 38px;border-top:1px solid #5b2c90;border-bottom-color:#5b2c90;margin-top:12px;color:#6b1a8a}:host([dark]) .f{color:#111}`,
el => `<span class="n">${at(el,"n")}</span><div class="p"><div class="t">Click to edit Master title style</div>${el.hasAttribute("body")?"<ul><li>•  Click to edit Master text styles</li><li>–  Second level</li><li>•  Third level</li><li>–  Fourth level</li><li>»  Fifth level</li></ul>":""}<div class="f"><span>&lt;date/time&gt;</span><span>&lt;footer&gt;</span><span>&lt;number&gt;</span></div></div>`);
define("slide-panel", `:host{display:flex;flex-direction:column;width:195px;padding:0 5px 5px 2px}header{display:flex;align-items:center;justify-content:space-between;height:36px;padding:0 2px 0 1px;font-weight:700}
.l{flex:1;display:flex;flex-direction:column;gap:6px;padding:6px;background:#fff;border:1px solid #b5b5b5;border-right:0;border-bottom:0}`,
`<header>Slides<button aria-label="Close panel"><lo-icon name="panelclose" style="--size:11px"></lo-icon></button></header><div class="l"><slide-thumb n="1" dark></slide-thumb><slide-thumb n="2" body selected></slide-thumb><slide-thumb n="3" body></slide-thumb><slide-thumb n="4"></slide-thumb></div>`);
define("pane-splitter", `:host{display:flex;align-items:center;width:8px;border-left:1px solid #b5b5b5}:host([right]){width:7px}button{width:7px;height:73px;margin-left:-1px;background:#999;display:grid;place-items:center}svg{display:block}`,
el => `<button aria-label="Toggle panel"><svg width="5" height="8"><path d="${el.hasAttribute("right")?"M0 0v8l5-4z":"M5 0v8L0 4z"}" fill="#fff"/></svg></button>`);

/* editing area */
define("info-bar", `:host{display:flex;align-items:center;height:40px;background:#bce5f7;border:1px solid #c4c4c4;padding:0 1px 0 3px;color:#111}
span{flex:1;padding-left:7px}.b{height:34px;padding:0 16px;border:1px solid #ccc;border-radius:6px;background:#fff;color:#3d3d3d;margin-right:4px}`,
el => `<lo-icon name="info" style="--size:30px"></lo-icon><span><slot></slot></span><button class="b">${at(el,"action")}</button><button aria-label="Close"><lo-icon name="closebig"></lo-icon></button>`);
define("place-holder", `:host{--x:repeating-linear-gradient(90deg,#bdbdbd 0 7px,#0000 7px 10px);--y:repeating-linear-gradient(#bdbdbd 0 7px,#0000 7px 10px);display:flex;flex-direction:column;height:53px;padding:7px 8px 0;text-align:right;background:var(--x) top/100% 1px no-repeat,var(--x) bottom/100% 1px no-repeat,var(--y) left/1px 100% no-repeat,var(--y) right/1px 100% no-repeat}
em{font:italic 20px/23px "Liberation Serif",serif;color:#800080}span{font:20px/19px "DejaVu Sans",sans-serif;color:#bdbdbd;white-space:nowrap}:host([center]) em{text-align:center}:host(:not([center])) em{padding-right:4px}`,
el => `<em>${at(el,"field")}</em><span><slot></slot></span>`);
define("edit-area", `:host{display:flex;flex-direction:column;flex:1;min-width:0}.row{display:flex;flex:1}.c{flex:1;background:#b9b9b9;padding:0 51px 0 44px}
.s{display:flex;flex-direction:column;height:416px;background:#fff;border:solid #6d6d6d;border-width:0 2px 2px;box-shadow:1px 1px 2px #0005}
p{margin:12px 0 0 316px;font:28px/36px "Liberation Sans",sans-serif;color:#000}.f{display:grid;grid-template-columns:385px 215px;gap:25px;justify-content:end;margin:auto 76px -2px 0}
.v{width:12px;display:grid;grid-template-rows:389fr 408fr 3fr;padding:0 3px}.v i{grid-row:2;border-radius:3px;background:#888}
.h{height:12px;display:grid;grid-template-columns:362fr 403fr 371fr;padding:3px 0}.h i{grid-column:2;border-radius:3px;background:#888}`,
`<info-bar action="Get involved">Help us make LibreOffice even better!</info-bar><info-bar action="Donate">Your donations support our worldwide community.</info-bar>
<div class="row"><div class="c"><div class="s"><p>Fifth level</p><div class="f"><place-holder center field="&amp;lt;footer&amp;gt;">Footer Area</place-holder><place-holder field="&amp;lt;number&amp;gt;">Slide Number Area</place-holder></div></div></div><div class="v"><i></i></div></div><div class="h"><i></i></div>`);

/* sidebar */
define("drop-list", `:host{display:block;position:relative}select{appearance:none;width:100%;height:34px;padding:0 30px 0 11px;font:inherit;color:inherit;background:#fff;border:1px solid #c6c6c6;border-radius:6px}
select:disabled{opacity:1;color:#a0a0a0;background:#fafafa}lo-icon{position:absolute;right:5px;top:5px;pointer-events:none}:host([disabled]) lo-icon{color:#a0a0a0}`,
el => `<select aria-label="${at(el,"label")}"${el.hasAttribute("disabled")?" disabled":""}><option>${at(el,"value")}</option></select><lo-icon name="chevdown"></lo-icon>`);
define("check-row", `:host{display:block}label{display:flex;align-items:center;gap:4px;height:25px;padding-left:4px;color:#a0a0a0}.b{display:grid;grid-template:16px/16px}
input{grid-area:1/1;appearance:none;margin:0;width:16px;height:16px;border:1px solid #c0c0c0;border-radius:3px}lo-icon{grid-area:1/1;margin:-4px}`,
`<label><span class="b"><input type="checkbox" checked disabled><lo-icon name="check"></lo-icon></span><slot></slot></label>`);
define("prop-deck", `:host{display:block;flex:none;width:454px;padding-left:2px}header{display:flex;align-items:center;height:26px;font-weight:700;padding:2px 0 0 16px;justify-content:space-between;position:relative}
header lo-icon.g{position:absolute;left:-6px;top:1px}h2{display:flex;align-items:center;height:18px;margin:0 0 6px;padding-right:1px;background:#ebebeb;font:inherit;font-weight:700}h2 span{flex:1}h2 .c{margin:0 -4px}h2 .e{margin:0 1px}
.f{display:grid;grid-template-columns:184px 158px;column-gap:7px;row-gap:3px}.f>label{text-align:right;line-height:34px}.w{grid-column:2}.b{height:34px;background:#fff;border:1px solid #c6c6c6;border-radius:6px}.k{margin:-2px 0 -1px}`,
`<header><lo-icon name="grip" class="g"></lo-icon>Properties<button aria-label="Close sidebar"><lo-icon name="close"></lo-icon></button></header><h2><lo-icon class="c" name="chevdown"></lo-icon><span>Master Slide</span><lo-icon class="e" name="gear" style="--size:14px"></lo-icon></h2>
<div class="f"><label>Format:</label><drop-list label="Format" value="On-scre…&nbsp; w (4:3)"></drop-list><label>Orientation:</label><drop-list label="Orientation" value="Landscape"></drop-list><button class="b w">Insert Image...</button><label>Master Slide:</label><drop-list label="Master Slide" value="Title Slide" disabled></drop-list>
<div class="w k"><check-row>Master Background</check-row><check-row>Master Objects</check-row></div><button class="b w">Close Master View</button></div>`);
define("deck-tabs", `:host{display:flex;flex-direction:column;gap:8px;width:50px;padding:2px 10px 0 4px}button{width:36px;height:34px;display:grid;place-items:center}.a{background:#d6d6d6;border:1px solid #c3c3c3;border-radius:6px}.m{margin-bottom:3px}`,
["burger","props","styles","gallery","navigator","diamond","transition","videodeck","masteredit"].map(n => `<button aria-label="${n}" class="${n==="props"?"a":n==="burger"?"m":""}"><lo-icon name="${n}"></lo-icon></button>`).join(""));

define("status-bar", `:host{display:grid;grid-template-columns:101px 201px 1fr 216px 23px 28px 377px 23px 145px 46px;height:21px;border-top:1px solid #b5b5b5;font-size:12px;align-items:center;padding-top:1px}
div{display:flex;align-items:center;justify-content:center;height:14px;border-right:1px solid #dcdcdc;white-space:nowrap}div:last-child{border:0}.p{justify-content:flex-start;gap:5px;padding-left:11px}.p span{width:80px}.z{gap:4px}.s{justify-content:flex-start;padding-left:10px}
input{appearance:none;width:98px;height:14px;margin:0;background:linear-gradient(#999,#999) center/100% 2px no-repeat}input::-webkit-slider-thumb{appearance:none;width:8px;height:12px;border:1px solid #555;border-radius:50%;background:#fafafa}
.z button{font:700 16px/14px "Open Sans",sans-serif;color:#666;width:12px}lo-icon{--size:15px}`,
`<div class="s">Slide 2 of 4 (19)</div><div style="border:0"></div><div>Title and Content</div><div class="p"><lo-icon name="pos"></lo-icon><span>33.90 / 13.33</span><lo-icon name="size"></lo-icon>0.00 x 0.00</div><div><lo-icon name="save"></lo-icon></div><div></div><div>English (USA)</div><div><lo-icon name="fit"></lo-icon></div><div class="z"><button>−</button><input type="range" min="0" max="100" value="48" aria-label="Zoom"><button>+</button></div><div>107%</div>`);

define("desktop-shell", `:host{display:flex;flex-direction:column;height:100vh}.d{display:flex;flex:1;min-height:0}.w{flex:1;min-width:0;display:flex;flex-direction:column;background:#fafafa}.m{display:flex;flex:1;min-height:0}`,
`<top-bar></top-bar><div class="d"><app-dock></app-dock><div class="w"><title-bar></title-bar><menu-bar></menu-bar><tool-bars></tool-bars><div class="m"><slide-panel></slide-panel><pane-splitter></pane-splitter><edit-area></edit-area><pane-splitter right></pane-splitter><prop-deck></prop-deck><deck-tabs></deck-tabs></div><status-bar></status-bar></div></div>`);
</script>
</body>
</html>
